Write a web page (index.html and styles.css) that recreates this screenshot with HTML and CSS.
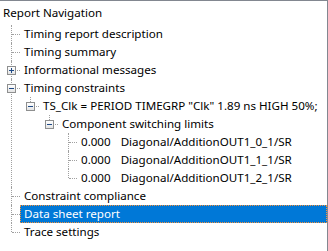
FILE: index.html
```html
<!DOCTYPE html>
<html lang="en">
<head>
  <meta charset="UTF-8" />
  <title>Report Navigation</title>
  <link rel="stylesheet" href="styles.css">
</head>
<body>

  <div class="panel">
    <div class="title">Report Navigation</div>

    <ul class="tree">
      <li>
        <div class="row"><span class="label">Timing report description</span></div>
      </li>
      <li>
        <div class="row"><span class="label">Timing summary</span></div>
      </li>
      <li>
        <span class="box plus"></span>
        <div class="row"><span class="label">Informational messages</span></div>
      </li>
      <li>
        <span class="box minus"></span>
        <div class="row"><span class="label">Timing constraints</span></div>
        <ul>
          <li class="last">
            <span class="box minus"></span>
            <div class="row"><span class="label">TS_Clk = PERIOD TIMEGRP "Clk" 1.89 ns HIGH 50%;</span></div>
            <ul>
              <li class="last">
                <span class="box minus"></span>
                <div class="row"><span class="label">Component switching limits</span></div>
                <ul>
                  <li>
                    <div class="row"><span class="label"><span class="num">0.000</span>Diagonal/AdditionOUT1_0_1/SR</span></div>
                  </li>
                  <li>
                    <div class="row"><span class="label"><span class="num">0.000</span>Diagonal/AdditionOUT1_1_1/SR</span></div>
                  </li>
                  <li class="last">
                    <div class="row"><span class="label"><span class="num">0.000</span>Diagonal/AdditionOUT1_2_1/SR</span></div>
                  </li>
                </ul>
              </li>
            </ul>
          </li>
        </ul>
      </li>
      <li>
        <div class="row"><span class="label">Constraint compliance</span></div>
      </li>
      <li>
        <div class="row"><span class="label selected">Data sheet report</span></div>
      </li>
      <li class="last">
        <div class="row"><span class="label">Trace settings</span></div>
      </li>
    </ul>
  </div>

</body>
</html>
```

FILE: styles.css
```css
:root {
  --line-color: #a0a0a0;
  --box-border: #8e8f8f;
  --sign-color: #1f4a86;
  --select-bg: #0078d7;
  --frame: #828790;
}

body {
  margin: 0;
  font-family: "Segoe UI", "Noto Sans", sans-serif;
  font-size: 11.6px;
  color: #000;
  background: #fff;
}

.panel {
  box-sizing: border-box;
  width: 328px;
  height: 251px;
  border-top: 1px solid var(--frame);
  border-right: 1px solid var(--frame);
  overflow: hidden;
}

.title {
  height: 18px;
  line-height: 18px;
  padding: 3px 0 3px 3px;
}

.tree,
.tree ul {
  list-style: none;
  margin: 0;
  padding: 0 0 0 19px;
}

.tree {
  padding-left: 11px;
}

.tree li {
  position: relative;
}

/* dotted tree lines */
.tree li::before {
  content: "";
  position: absolute;
  left: 0;
  top: 0;
  bottom: 0;
  border-left: 1px dotted var(--line-color);
}

.tree li.last::before {
  bottom: auto;
  height: 9px;
}

.tree li::after {
  content: "";
  position: absolute;
  left: 1px;
  top: 9px;
  width: 8px;
  border-top: 1px dotted var(--line-color);
}

.row {
  display: flex;
  align-items: center;
  height: 18px;
  padding-left: 9px;
  white-space: nowrap;
}

.label {
  line-height: 16px;
  padding: 0 2px 0 3px;
  border: 1px solid transparent;
}

.label.selected {
  flex: 1;
  background: var(--select-bg);
  color: #fff;
  border: 1px dotted #f5913a;
}

.num {
  margin-right: 10px;
}

/* expand / collapse boxes */
.box {
  position: absolute;
  z-index: 1;
  left: -4px;
  top: 5px;
  width: 9px;
  height: 9px;
  box-sizing: border-box;
  border: 1px solid var(--box-border);
  background: linear-gradient(#ffffff, #e4e4e4);
}

.box::before,
.box::after {
  content: "";
  position: absolute;
  background: var(--sign-color);
}

.box::before {
  left: 1px;
  top: 3px;
  width: 5px;
  height: 1px;
}

.box.plus::after {
  left: 3px;
  top: 1px;
  width: 1px;
  height: 5px;
}
```
